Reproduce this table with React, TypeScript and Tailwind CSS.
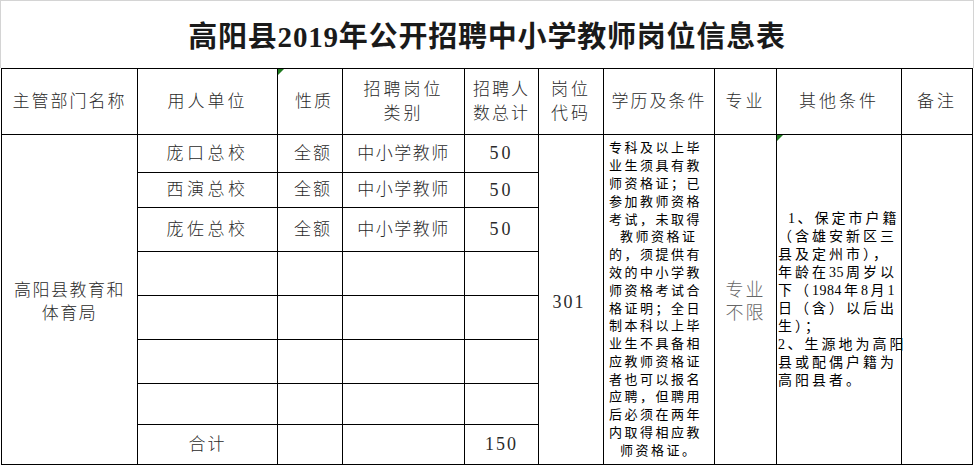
const serifCjk = "font-['Liberation_Serif','Noto_Sans_CJK_SC',serif]"

const eduLines = [
  "专科及以上毕",
  "业生须具有教",
  "师资格证；已",
  "参加教师资格",
  "考试，未取得",
  " 教师资格证",
  "的，须提供有",
  "效的中小学教",
  "师资格考试合",
  "格证明；全日",
  "制本科以上毕",
  "业生不具备相",
  "应教师资格证",
  "者也可以报名",
  "应聘，但聘用",
  "后必须在两年",
  "内取得相应教",
  " 师资格证。",
]

const otherLines = [
  " 1、保定市户籍",
  "（含雄安新区三",
  "县及定州市），",
  "年龄在35周岁以",
  "下（1984年8月1",
  "日（含）以后出",
  "生）；",
  "2、生源地为高阳",
  "县或配偶户籍为",
  "高阳县者。",
]

const units = [
  { name: "庞口总校", h: "h-[38px]" },
  { name: "西演总校", h: "h-[35px]" },
  { name: "庞佐总校", h: "h-[44px]" },
]

const emptyRows = ["h-[44px]", "h-[44px]", "h-[44px]", "h-[41px]"]

function Flag() {
  return (
    <svg className="absolute left-0 top-0" width="6" height="6" viewBox="0 0 6 6">
      <polygon points="0,0 6,0 0,6" fill="#1f7a1f" />
    </svg>
  )
}

// digits in the reference are narrow and unspaced
function Line({ text }: { text: string }) {
  return (
    <>
      {text.split(/(\d+)/).map((part, i) =>
        /^\d+$/.test(part) ? (
          <span key={i} className="tracking-[0.5px] pr-[2px]">
            {part}
          </span>
        ) : (
          <span key={i}>{part}</span>
        )
      )}
    </>
  )
}

const cell = "border border-black p-0 text-center align-middle"

export default function App() {
  return (
    <div className={`w-[974px] h-[466px] bg-white ${serifCjk} overflow-hidden`}>
      {/* Title */}
      <div className="h-[68px] border-t border-l border-r border-[#d4d4d4] flex items-center justify-center pt-[6px]">
        <h1 className="text-[29px] font-bold text-[#1a1a1a] tracking-[0.8px]">
          高阳县2019年公开招聘中小学教师岗位信息表
        </h1>
      </div>

      <div className="pl-[1px]">
        <table className="table-fixed border-collapse w-[971px]">
          <colgroup>
            <col className="w-[136px]" />
            <col className="w-[140px]" />
            <col className="w-[65px]" />
            <col className="w-[122px]" />
            <col className="w-[74px]" />
            <col className="w-[65px]" />
            <col className="w-[111px]" />
            <col className="w-[62px]" />
            <col className="w-[125px]" />
            <col className="w-[71px]" />
          </colgroup>
          <thead>
            <tr className="h-[66px] text-[17px] text-[#2a2a2a] leading-[24px]">
              <th className={`${cell} font-light tracking-[2px]`}>主管部门名称</th>
              <th className={`${cell} font-light tracking-[3px]`}>用人单位</th>
              <th className={`${cell} font-light tracking-[2px] relative`}>
                <Flag />
                <span className="pl-[8px]">性质</span>
              </th>
              <th className={`${cell} font-light tracking-[3px]`}>
                招聘岗位
                <br />
                类别
              </th>
              <th className={`${cell} font-light tracking-[2px]`}>
                招聘人
                <br />
                数总计
              </th>
              <th className={`${cell} font-light tracking-[3px]`}>
                岗位
                <br />
                代码
              </th>
              <th className={`${cell} font-light tracking-[2px] whitespace-nowrap`}>学历及条件</th>
              <th className={`${cell} font-light tracking-[3px]`}>专业</th>
              <th className={`${cell} font-light tracking-[3px]`}>其他条件</th>
              <th className={`${cell} font-light tracking-[3px]`}>备注</th>
            </tr>
          </thead>
          <tbody className="text-[#2a2a2a] font-light">
            {units.map((u, i) => (
              <tr key={u.name} className={u.h}>
                {i === 0 && (
                  <td rowSpan={8} className={`${cell} text-[17px] leading-[23px] tracking-[1.5px]`}>
                    <div className="pt-[4px]">
                      高阳县教育和
                      <br />
                      体育局
                    </div>
                  </td>
                )}
                <td className={`${cell} text-[17px] tracking-[3.5px]`}>{u.name}</td>
                <td className={`${cell} text-[17px] tracking-[2px]`}>
                  <span className="pl-[6px]">全额</span>
                </td>
                <td className={`${cell} text-[17px] tracking-[1.5px]`}>中小学教师</td>
                <td className={`${cell} text-[18px] tracking-[3px]`}>50</td>
                {i === 0 && (
                  <>
                    <td rowSpan={8} className={`${cell} text-[18px] tracking-[2px]`}>
                      <div className="pt-[6px] pr-[4px]">301</div>
                    </td>
                    <td rowSpan={8} className={`${cell} text-left text-black font-normal`}>
                      <div className="pl-[5px] text-[13px] leading-[17.8px] tracking-[2.5px]">
                        {eduLines.map((l, k) => (
                          <div
                            key={k}
                            className={`whitespace-nowrap ${l.startsWith(" ") ? "pl-[11px]" : ""}`}
                          >
                            {l.trim()}
                          </div>
                        ))}
                      </div>
                    </td>
                    <td rowSpan={8} className={`${cell} text-[18px] leading-[23px] tracking-[2px] text-[#666]`}>
                      <div className="pt-[4px]">
                        专业
                        <br />
                        不限
                      </div>
                    </td>
                    <td rowSpan={8} className={`${cell} text-left text-black font-normal relative`}>
                      <Flag />
                      <div className="pl-[1px] text-[14px] leading-[18px] tracking-[3px]">
                        {otherLines.map((l, k) => (
                          <div
                            key={k}
                            className={`whitespace-nowrap ${l.startsWith(" ") ? "pl-[10px]" : ""}`}
                          >
                            <Line text={l.trim()} />
                          </div>
                        ))}
                      </div>
                    </td>
                    <td rowSpan={8} className={cell}></td>
                  </>
                )}
              </tr>
            ))}
            {emptyRows.map((h, i) => (
              <tr key={i} className={h}>
                <td className={cell}></td>
                <td className={cell}></td>
                <td className={cell}></td>
                <td className={cell}></td>
              </tr>
            ))}
            <tr className="h-[40px]">
              <td className={`${cell} text-[17px] tracking-[2px]`}>合计</td>
              <td className={cell}></td>
              <td className={cell}></td>
              <td className={`${cell} text-[18px] tracking-[2px]`}>150</td>
            </tr>
          </tbody>
        </table>
      </div>
    </div>
  )
}
